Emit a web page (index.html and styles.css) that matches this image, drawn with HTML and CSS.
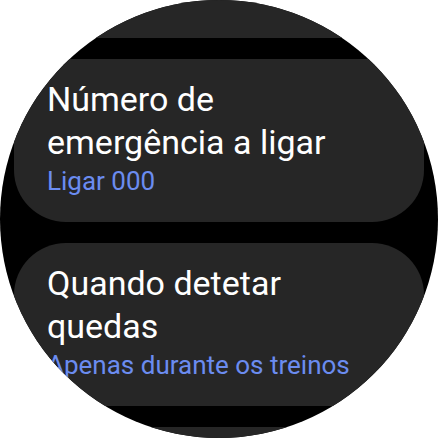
FILE: index.html
```html
<!DOCTYPE html>
<html lang="pt">
<head>
<meta charset="utf-8">
<link rel="stylesheet" href="styles.css">
</head>
<body>
<div class="screen">
  <div class="list">
    <div class="card"></div>
    <div class="card">
      <div class="title">Número de emergência a ligar</div>
      <div class="sub">Ligar 000</div>
    </div>
    <div class="card">
      <div class="title">Quando detetar quedas</div>
      <div class="sub">Apenas durante os treinos</div>
    </div>
    <div class="card"></div>
  </div>
</div>
</body>
</html>
```
FILE: styles.css
```css
html, body {
  margin: 0;
  padding: 0;
  background: #ffffff;
}
.screen {
  width: 438px;
  height: 438px;
  border-radius: 50%;
  overflow: hidden;
  background: #000000;
}
.list {
  display: flex;
  flex-direction: column;
  gap: 21px;
  padding: 0 14px;
  margin-top: -125px;
}
.card {
  height: 163px;
  box-sizing: border-box;
  background: #262626;
  border-radius: 52px;
  padding: 19px 20px 0 33px;
  font-family: Roboto, "Noto Sans", sans-serif;
  flex-shrink: 0;
}
.title {
  color: #ffffff;
  font-size: 34px;
  line-height: 43px;
  width: 320px;
}
.sub {
  color: #6b8cf0;
  font-size: 26px;
  line-height: 30px;
  margin-top: 2px;
  white-space: nowrap;
}
```
